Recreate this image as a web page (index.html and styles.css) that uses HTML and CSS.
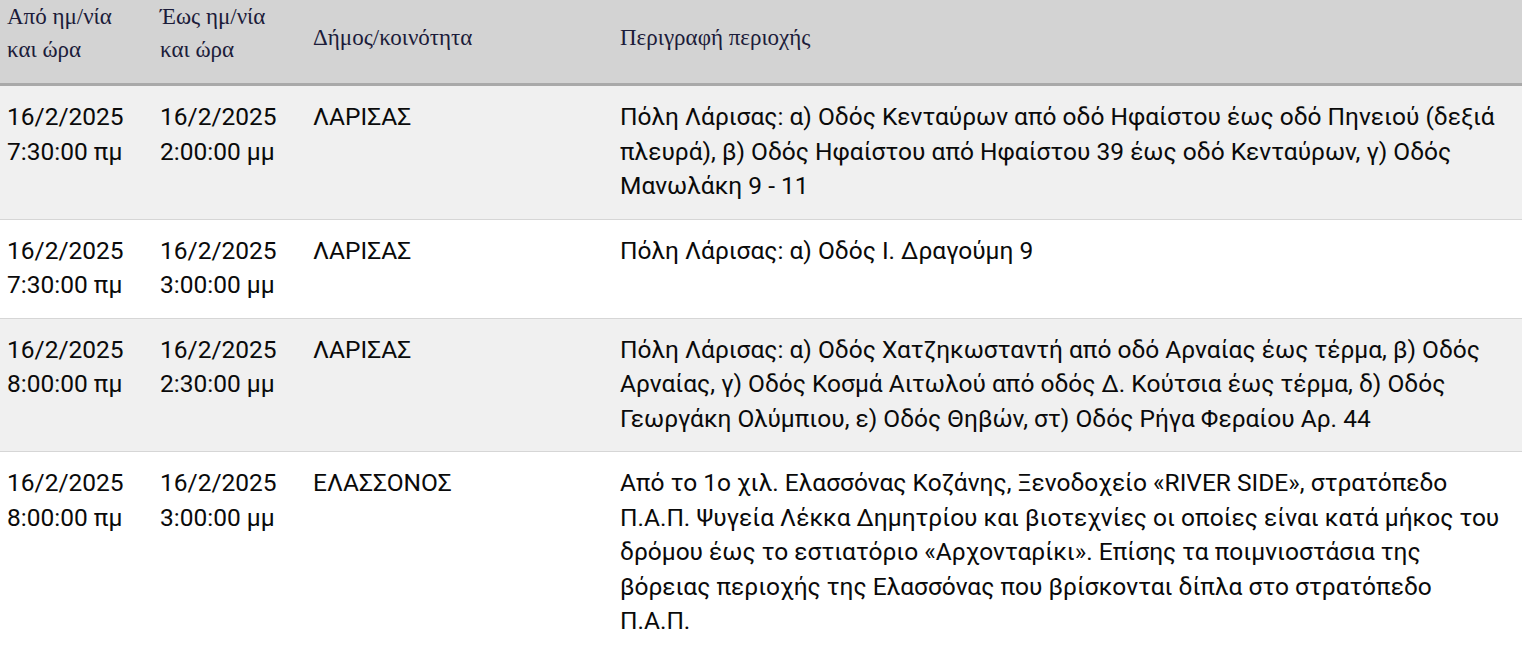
FILE: index.html
```html
<!DOCTYPE html>
<html lang="el">
<head>
<meta charset="utf-8">
<title>Διακοπές ρεύματος</title>
<link rel="stylesheet" href="styles.css">
</head>
<body>
<table class="outages">
  <colgroup>
    <col class="c-from">
    <col class="c-to">
    <col class="c-dimos">
    <col class="c-desc">
  </colgroup>
  <thead>
    <tr>
      <th>Από ημ/νία<br>και ώρα</th>
      <th>Έως ημ/νία<br>και ώρα</th>
      <th class="single">Δήμος/κοινότητα</th>
      <th class="single">Περιγραφή περιοχής</th>
    </tr>
  </thead>
  <tbody>
    <tr class="odd">
      <td>16/2/2025<br>7:30:00 πμ</td>
      <td>16/2/2025<br>2:00:00 μμ</td>
      <td>ΛΑΡΙΣΑΣ</td>
      <td>Πόλη Λάρισας: α) Οδός Κενταύρων από οδό Ηφαίστου έως οδό Πηνειού (δεξιά πλευρά), β) Οδός Ηφαίστου από Ηφαίστου 39 έως οδό Κενταύρων, γ) Οδός Μανωλάκη 9 - 11</td>
    </tr>
    <tr>
      <td>16/2/2025<br>7:30:00 πμ</td>
      <td>16/2/2025<br>3:00:00 μμ</td>
      <td>ΛΑΡΙΣΑΣ</td>
      <td>Πόλη Λάρισας: α) Οδός Ι. Δραγούμη 9</td>
    </tr>
    <tr class="odd">
      <td>16/2/2025<br>8:00:00 πμ</td>
      <td>16/2/2025<br>2:30:00 μμ</td>
      <td>ΛΑΡΙΣΑΣ</td>
      <td>Πόλη Λάρισας: α) Οδός Χατζηκωσταντή από οδό Αρναίας έως τέρμα, β) Οδός Αρναίας, γ) Οδός Κοσμά Αιτωλού από οδός Δ. Κούτσια έως τέρμα, δ) Οδός Γεωργάκη Ολύμπιου, ε) Οδός Θηβών, στ) Οδός Ρήγα Φεραίου Αρ. 44</td>
    </tr>
    <tr>
      <td>16/2/2025<br>8:00:00 πμ</td>
      <td>16/2/2025<br>3:00:00 μμ</td>
      <td>ΕΛΑΣΣΟΝΟΣ</td>
      <td>Από το 1ο χιλ. Ελασσόνας Κοζάνης, Ξενοδοχείο «RIVER SIDE», στρατόπεδο Π.Α.Π. Ψυγεία Λέκκα Δημητρίου και βιοτεχνίες οι οποίες είναι κατά μήκος του δρόμου έως το εστιατόριο «Αρχονταρίκι». Επίσης τα ποιμνιοστάσια της βόρειας περιοχής της Ελασσόνας που βρίσκονται δίπλα στο στρατόπεδο Π.Α.Π.</td>
    </tr>
  </tbody>
</table>
</body>
</html>
```
FILE: styles.css
```css
html, body {
  margin: 0;
  padding: 0;
  background: #ffffff;
}

.outages {
  width: 100%;
  border-collapse: collapse;
  table-layout: fixed;
}

.c-from { width: 153px; }
.c-to { width: 153px; }
.c-dimos { width: 307px; }
.c-desc { width: auto; }

.outages th {
  background: #d3d3d3;
  color: #1c1c3a;
  font-family: "Liberation Serif", "DejaVu Serif", serif;
  font-weight: normal;
  font-size: 23px;
  line-height: 33px;
  text-align: left;
  vertical-align: middle;
  padding: 0 7px 17px;
  border-bottom: 3px solid #a9a9a9;
}

.outages th.single {
  padding-top: 4px;
  padding-bottom: 13px;
}

.outages td {
  font-family: Roboto, "Liberation Sans", sans-serif;
  font-size: 24.5px;
  line-height: 34.5px;
  color: #0a0a0a;
  vertical-align: top;
  text-align: left;
  padding: 14px 7px 15px;
  border-bottom: 1px solid #d6d6d6;
}

.outages tr.odd td {
  background: #f0f0f0;
}

.outages td:last-child {
  padding-right: 20px;
}
```
